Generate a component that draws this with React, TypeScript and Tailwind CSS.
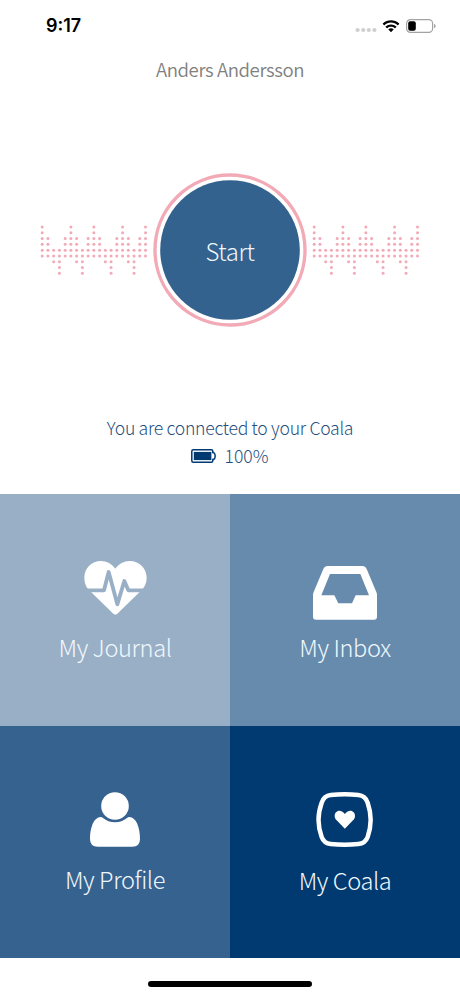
import type { ReactNode } from "react";

// [first row, last row] of dots for each column of the heartbeat pattern
const PULSE: [number, number][] = [
  [0, 5], [2, 5], [4, 6], [4, 8], [2, 5], [0, 5], [2, 6], [4, 8], [2, 5], [0, 5],
  [2, 5], [4, 6], [4, 8], [2, 5], [0, 5], [2, 6], [4, 8], [2, 5], [0, 5],
];
const STEP_X = 5.74;
const STEP_Y = 5.79;

function PulseDots() {
  return (
    <svg width="108" height="50" viewBox="0 0 108 50" className="shrink-0 fill-[#f2aab7]">
      {PULSE.map(([from, to], col) =>
        Array.from({ length: to - from + 1 }, (_, i) => (
          <circle
            key={`${col}-${i}`}
            cx={2.2 + col * STEP_X}
            cy={2 + (from + i) * STEP_Y}
            r="1.5"
          />
        )),
      )}
    </svg>
  );
}

function StatusBar() {
  return (
    <header className="flex h-[52px] items-center justify-between pl-[46px] pr-[24px]">
      <span className="font-['Inter'] text-[18px] font-semibold leading-none text-black">9:17</span>
      <div className="flex items-center">
        <svg width="22" height="6" viewBox="0 0 22 6" className="mt-[8px] fill-[#cfcfcf]">
          <circle cx="2.6" cy="3" r="2.1" />
          <circle cx="8.2" cy="3" r="2.1" />
          <circle cx="13.8" cy="3" r="2.1" />
          <circle cx="19.4" cy="3" r="2.1" />
        </svg>
        <svg width="18" height="13" viewBox="0 0 18 13" className="ml-[5px] fill-black">
          <path d="M9 2.6c2.5 0 4.8 1 6.5 2.6.1.1.3.1.4 0l1.3-1.3c.1-.1.1-.3 0-.4C12.6-.8 5.4-.8.8 3.5c-.1.1-.1.3 0 .4l1.3 1.3c.1.1.3.1.4 0C4.2 3.6 6.5 2.6 9 2.6z" />
          <path d="M9 6.8c1.4 0 2.7.5 3.7 1.4.1.1.3.1.4 0l1.3-1.3c.1-.1.1-.3 0-.4-3-2.8-7.8-2.8-10.8 0-.1.1-.1.3 0 .4l1.3 1.3c.1.1.3.1.4 0 1-.9 2.3-1.4 3.7-1.4z" />
          <path d="M11.6 9.6c.1-.1.1-.3 0-.4-1.5-1.2-3.7-1.2-5.2 0-.1.1-.1.3 0 .4l2.4 2.5c.1.1.3.1.4 0z" />
        </svg>
        <svg width="30" height="14" viewBox="0 0 30 14" className="ml-[6px]">
          <rect x="0.6" y="0.6" width="26" height="12.8" rx="3.8" fill="none" stroke="#a3a3a3" strokeWidth="1.2" />
          <rect x="2.2" y="2.2" width="7.6" height="9.6" rx="2" fill="#000" />
          <path d="M28 4.7c1 .4 1.6 1.3 1.6 2.3S29 8.9 28 9.3z" fill="#a3a3a3" />
        </svg>
      </div>
    </header>
  );
}

function StartButton() {
  return (
    <button className="relative flex size-[154px] shrink-0 items-center justify-center">
      <svg width="154" height="154" viewBox="0 0 154 154" className="absolute inset-0">
        <circle cx="77" cy="77" r="75" fill="none" stroke="#f2aab7" strokeWidth="3.4" />
        <circle cx="77" cy="77" r="69.8" fill="#33628e" />
      </svg>
      <span className="relative pt-[1px] text-[23.9px] font-light tracking-[-0.4px] text-[#f0f7fd]">Start</span>
    </button>
  );
}

function JournalIcon() {
  return (
    <svg width="63" height="54" viewBox="131 46 189 162">
      <path
        d="M225 69C215 55 199 46 182 46C154 46 132 68 132 96C132 110 136 122 145 132L219 204Q225 209 231 204L305 132C314 122 319 110 319 96C319 68 296 46 268 46C251 46 235 55 225 69Z"
        fill="#fff"
      />
      <path
        d="M131 134H191L205 79L231 176L252 106L264 134H320"
        fill="none"
        stroke="#98afc6"
        strokeWidth="11.5"
        strokeLinecap="round"
        strokeLinejoin="round"
      />
    </svg>
  );
}

function InboxIcon() {
  return (
    <svg width="64" height="54" viewBox="98 63 192 162" className="-mb-[5px]">
      <path
        fill="#fff"
        fillRule="evenodd"
        d="M98 149Q98 146 100 141L129 72Q133 63 142 63H246Q255 63 259 72L288 141Q290 146 290 149V215Q290 224 281 224H107Q98 224 98 215ZM149 87L123 151H162L174 175H215L226 151H266L240 87Z"
      />
    </svg>
  );
}

function ProfileIcon() {
  return (
    <svg width="50" height="55" viewBox="150 36 150 165" fill="#fff">
      <circle cx="225" cy="78" r="41.5" />
      <path d="M182 111Q186 111 189 114C199 122 211 127 225 127C239 127 251 122 261 114Q264 111 268 111C289 112 300 143 300 177Q300 200 277 200H173Q150 200 150 177C150 143 161 112 182 111Z" />
    </svg>
  );
}

function CoalaIcon() {
  return (
    <svg width="57" height="55" viewBox="108 36 171 165" className="mr-[2px]">
      <path
        d="M152 45Q194 41 235 45Q256 47 263 68Q272 95 272 119Q272 144 263 171Q256 190 235 192Q194 196 152 192Q132 190 125 171Q115.5 144 115.5 119Q115.5 95 125 68Q132 47 152 45Z"
        fill="none"
        stroke="#fff"
        strokeWidth="13.5"
      />
      <path
        d="M194.5 102C189 94 183 92 178 92C170 92 164 99 164 107C164 113 166 117 170 121L194.5 146L219 121C223 117 225 113 225 107C225 99 219 92 211 92C206 92 200 94 194.5 102Z"
        fill="#fff"
      />
    </svg>
  );
}

type TileProps = { label: string; className: string; labelClass?: string; children: ReactNode };

function Tile({ label, className, labelClass = "mt-[13px]", children }: TileProps) {
  return (
    <button className={`flex h-[232px] flex-col items-center pt-[66px] ${className}`}>
      <span className="flex h-[55px] items-end justify-center">{children}</span>
      <span
        className={`whitespace-nowrap text-[23.6px] font-light leading-[38px] tracking-[-0.4px] text-[#f0f7fd] ${labelClass}`}
      >
        {label}
      </span>
    </button>
  );
}

export default function App() {
  return (
    <div className="flex h-[996px] w-[460px] flex-col overflow-hidden bg-white font-['Noto_Sans_CJK_SC','Open_Sans',sans-serif]">
      <StatusBar />
      <h1 className="h-[34px] text-center text-[18.6px] font-[350] leading-[33px] tracking-[-0.4px] text-[#808080]">
        Anders Andersson
      </h1>

      <main className="mt-[87px] flex h-[154px] items-center justify-center gap-[5px]">
        <PulseDots />
        <StartButton />
        <PulseDots />
      </main>

      <section className="mt-[87px] flex h-[80px] flex-col items-center text-[17.6px] font-light leading-[28px] tracking-[-0.27px] text-[#1f4f80]">
        <p>You are connected to your Coala</p>
        <div className="flex items-center gap-[8px]">
          <svg width="25" height="14" viewBox="0 0 25 14">
            <path
              d="M2.2.8H20.3Q21.8.8 21.8 2.3V3.4H22.5Q24.2 4.5 24.2 7T22.5 10.6H21.8V11.7Q21.8 13.2 20.3 13.2H2.2Q.8 13.2.8 11.7V2.3Q.8.8 2.2.8Z"
              fill="none"
              stroke="#003a70"
              strokeWidth="1.5"
            />
            <rect x="2.8" y="2.9" width="17.6" height="8.2" fill="#003a70" />
          </svg>
          <span className="tracking-normal">100%</span>
        </div>
      </section>

      <nav className="grid grid-cols-2">
        <Tile label="My Journal" className="bg-[#98afc6]">
          <JournalIcon />
        </Tile>
        <Tile label="My Inbox" className="bg-[#668bac]">
          <InboxIcon />
        </Tile>
        <Tile label="My Profile" className="bg-[#36628f]">
          <ProfileIcon />
        </Tile>
        <Tile label="My Coala" className="bg-[#003a70]" labelClass="mt-[14px]">
          <CoalaIcon />
        </Tile>
      </nav>

      <footer className="flex justify-center pt-[23px]">
        <div className="h-[6px] w-[164px] rounded-full bg-black" />
      </footer>
    </div>
  );
}
